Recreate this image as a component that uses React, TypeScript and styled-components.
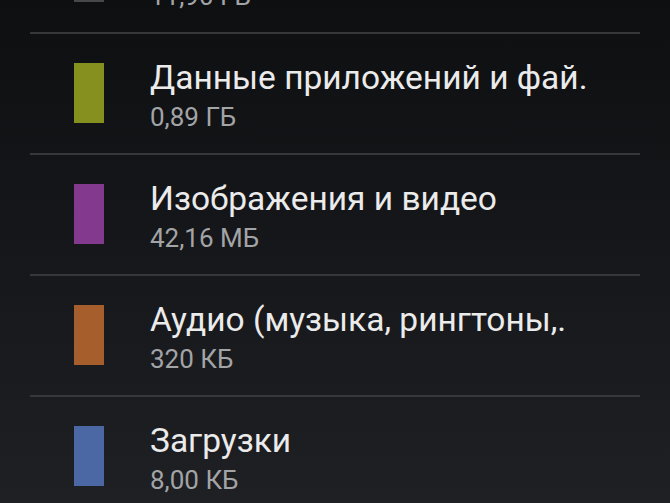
import React from "react";
import styled, { createGlobalStyle } from "styled-components";

const Global = createGlobalStyle`
  html, body {
    margin: 0;
    padding: 0;
    height: 100%;
    overflow: hidden;
  }
  body {
    background: linear-gradient(180deg, #0e0f11 0%, #16171a 50%, #1e2023 100%);
    font-family: Roboto, "Noto Sans", sans-serif;
  }
`;

const Screen = styled.div`
  width: 670px;
  height: 503px;
  overflow: hidden;
`;

// list is scrolled: first entry only partly visible
const List = styled.ul`
  list-style: none;
  margin: -87px 0 0 0;
  padding: 0;
`;

const Row = styled.li`
  display: flex;
  align-items: flex-start;
  height: 119px;
  margin: 0 30px;
  border-bottom: 2px solid #35373a;
`;

const Swatch = styled.div<{ $color: string }>`
  flex: none;
  width: 30px;
  height: 60px;
  margin: 29px 46px 0 44px;
  background: ${(p) => p.$color};
`;

const Texts = styled.div`
  display: flex;
  flex-direction: column;
  padding-top: 24px;
`;

const Title = styled.div`
  color: #ebebeb;
  font-size: 33.5px;
  line-height: 40px;
  white-space: nowrap;
`;

const Size = styled.div`
  margin-top: 4px;
  color: #a3a4a6;
  font-size: 26px;
  line-height: 30px;
`;

const items = [
  { title: "Доступно", size: "11,90 ГБ", color: "#46484a" },
  { title: "Данные приложений и фай.", size: "0,89 ГБ", color: "#86901f" },
  { title: "Изображения и видео", size: "42,16 МБ", color: "#82398e" },
  { title: "Аудио (музыка, рингтоны,.", size: "320 КБ", color: "#a55e2c" },
  { title: "Загрузки", size: "8,00 КБ", color: "#4c68a4" },
];

export default function App() {
  return (
    <Screen>
      <Global />
      <List>
        {items.map((it) => (
          <Row key={it.title}>
            <Swatch $color={it.color} />
            <Texts>
              <Title>{it.title}</Title>
              <Size>{it.size}</Size>
            </Texts>
          </Row>
        ))}
      </List>
    </Screen>
  );
}
